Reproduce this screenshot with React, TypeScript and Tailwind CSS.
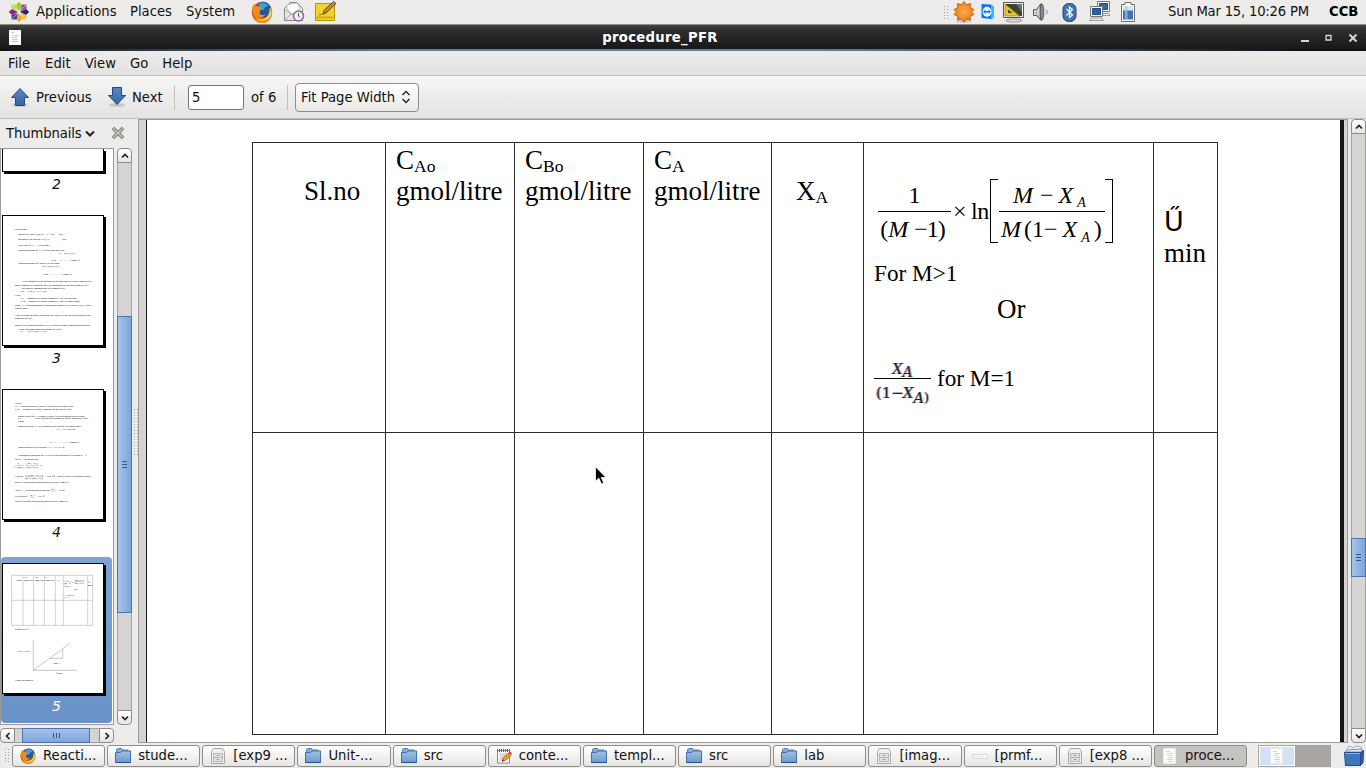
import React from "react";

type MiniLine = [number, number, number, string];

const page3: MiniLine[] = [
  [45, 60, 38, "Calculations:"],
  [54, 75, 110, "Molarity of NaOH (say) M = v1 × m1"],
  [177, 75, 12, "GMS"],
  [54, 90, 102, "Volume of the reactor VR (V1) ="],
  [186, 90, 12, "litre"],
  [54, 108, 94, "Flow rate of EA = v (vol/time)"],
  [54, 123, 140, "Concentration of EA in the feed mixture"],
  [177, 132, 48, "CA=(M×v)/(V)"],
  [153, 153, 86, "CAo = ------------- gmol/lit"],
  [54, 162, 124, "Concentration of NaOH in the feed"],
  [126, 171, 52, "CB=(M×v)/(V)"],
  [129, 195, 86, "CBo = ------------- gmol/lit"],
  [63, 216, 212, "As the conductivity of solution is variable only of NaOH conductivity"],
  [45, 228, 222, "meter reading at the outlet may be correlated to concentration at 30°C"],
  [63, 237, 132, "To express composition by conductivity"],
  [63, 246, 77, "Ca = CAo [1-XA/1-XB]"],
  [45, 258, 16, "Where"],
  [63, 267, 166, "CT = conductivity meter reading at T of the reaction"],
  [63, 276, 176, "CTo = conductivity meter reading at 30°C of feed stream"],
  [45, 289, 228, "Ohm - C is corresponding to measured conductivity ratio (C)/(C), using"],
  [45, 297, 39, "equation above"],
  [45, 318, 228, "Find the slope of meter calibrated for NaOH in the reactor solution at any"],
  [45, 327, 52, "temperature at 30°C"],
  [45, 348, 226, "Obtain the Concentration of CH3C using the data from equation below"],
  [54, 360, 132, "Final solution concentration at 30°C"],
  [63, 367, 76, "CA = C(B+C)/(B+C+0)"],
];

const page4: MiniLine[] = [
  [45, 162, 18, "Where"],
  [45, 171, 175, "XA = Concentration of NaOH in the mixture at steady state"],
  [45, 180, 171, "CAo = Conductivity meter reading for mixture at 30°C"],
  [54, 201, 200, "Obtain value of CA through (NaOH) in the equation rate is equal"],
  [54, 207, 10, "CT"],
  [105, 207, 160, "gives final mixture from the initial reading at 30°C"],
  [54, 216, 18, "graph"],
  [54, 231, 188, "Obtain value of CA by formula in the rate of the steady state"],
  [171, 240, 55, "CA=CT-CAo*CBo"],
  [147, 279, 90, "XA  ---------------- gmol/lit"],
  [54, 294, 138, "Conversion of ethyl acetate: XA=1-CA/CAo"],
  [54, 318, 205, "Performance equation for PFR with rate equation of first order n = k"],
  [45, 330, 70, "for M=1 can be derived"],
  [50, 343, 8, "1"],
  [45, 353, 28, "CAo(M-1)"],
  [78, 343, 36, "[ M - XA ]"],
  [78, 353, 36, "[M(1-XA)]"],
  [117, 347, 9, "=kt"],
  [45, 381, 24, "Plotting"],
  [75, 377, 54, "1     [ M - XA ]"],
  [75, 386, 54, "(M-1) [M(1-XA)]"],
  [141, 381, 24, "vs  Ű"],
  [171, 381, 102, "yields a straight line passing through"],
  [45, 399, 162, "origin if the assumed rate equation is correct. Slope is k"],
  [45, 423, 105, "For M=1, the performance equation"],
  [153, 420, 14, "XA"],
  [170, 423, 24, "= kCAot"],
  [45, 441, 37, "In this plot of"],
  [90, 438, 14, "XA"],
  [114, 441, 20, "vs  Ű"],
  [45, 456, 158, "yields a straight line passing through origin. Slope is k"],
];

const page5: MiniLine[] = [
  [48, 93, 17, "Sl.no"],
  [72, 84, 9, "CAo"],
  [72, 93, 27, "gmol/litre"],
  [105, 84, 9, "CBo"],
  [105, 93, 27, "gmol/litre"],
  [136, 84, 7, "CA"],
  [136, 93, 27, "gmol/litre"],
  [171, 93, 9, "XA"],
  [198, 93, 5, "1"],
  [192, 102, 20, "(M -1)"],
  [213, 98, 9, "×ln"],
  [224, 93, 27, "[M-XA]"],
  [224, 102, 27, "M(1-XA)"],
  [192, 111, 21, "For M>1"],
  [222, 120, 9, "Or"],
  [193, 137, 34, "XA for M=1"],
  [193, 144, 14, "(1-XA)"],
  [264, 100, 6, "Ű"],
  [264, 108, 13, "min"],
  [45, 240, 42, "Graph for M ≠1"],
  [51, 307, 37, "1/(M-1)×ln"],
  [159, 342, 21, "Slope=k"],
  [168, 372, 18, "Ű  min"],
  [45, 393, 62, "From the graph k ="],
];

function Page({ lines, top, children }: { lines: MiniLine[]; top: number; children?: React.ReactNode }) {
  return (
    <div className="h-[131px] w-[102px] shrink-0 border border-black bg-white shadow-[2px_2px_0_0_#000]">
      <svg width="100" height="129" viewBox={`9 ${top} 300 387`} className="block">
        {children}
        {lines.map(([x, y, w, t], i) => (
          <text key={i} x={x} y={y} textLength={w} lengthAdjust="spacingAndGlyphs" fontSize="7.8" fill="#000" fontFamily="Liberation Serif, serif">
            {t}
          </text>
        ))}
      </svg>
    </div>
  );
}

function Firefox({ s }: { s: number }) {
  return (
    <svg width={s} height={s} viewBox="0 0 20 20" className="shrink-0">
      <circle cx="10" cy="10" r="9.3" fill="#e2611a" />
      <circle cx="11" cy="8" r="7.3" fill="#1d5a9e" />
      <path d="M7 2.5c3-1.500 7-1 9 2l-3 1-2 3-4-1z" fill="#3fa0d6" />
      <path d="M.8 10C.5 6 1.500 4 3 2.500l1 2.200C6 4 7.500 5 8 6l2 .7c0 1.200-1.500 1.300-2 2.300.300 1 .2 1.600-.5 2.200 1.200 2 3.800 2 5.500.8-1 3.500-6 4-8 1.500C7 17 13 18 16.500 13.500c1-2 1.100-5 .5-7.500 2 2 2.500 5 2 7.500A9.300 9.300 0 0 1 .8 10z" fill="#f08c1c" />
      <path d="M17 6c2 3 2 7-.5 9.500-3 3-8 3.500-11.500.5 4 1.500 9 .5 11-4 .8-2 1.200-4 1-6z" fill="#ffd04a" />
      <path d="M1 8c.3 4 2 7 5 9-3-1-5.200-4-5.200-7z" fill="#c5301a" />
    </svg>
  );
}

function Folder() {
  return (
    <svg width="18" height="18" viewBox="0 0 18 18" className="shrink-0">
      <defs>
        <linearGradient id="folderFill" x1="0" y1="0" x2="0" y2="1">
          <stop offset="0" stopColor="#a3c0e2" />
          <stop offset="1" stopColor="#6b9bd0" />
        </linearGradient>
      </defs>
      <path d="M2.500 6V2.500l1-1h4l1 1.500h5.500V6z" fill="#88abd4" stroke="#5680b5" />
      <path d="M1.500 5.500h5l1.500-1.500h8.500v11.500h-15z" fill="url(#folderFill)" stroke="#3f6fae" />
      <path d="M1.500 15.500h15" stroke="#24508d" />
    </svg>
  );
}

function Cabinet() {
  return (
    <svg width="18" height="18" viewBox="0 0 18 18" className="shrink-0">
      <path d="M4.500 1.500h9l2 3v12h-13v-12z" fill="#f0f0ef" stroke="#a7a7a5" />
      <path d="M4.500 6.500h9v4h-9zM4.500 10.500h9v4h-9z" fill="#e2e2e1" stroke="#b5b5b3" />
      <path d="M7.500 8.500h3M7.500 12.500h3" stroke="#a0a09e" />
    </svg>
  );
}

function Doc() {
  return (
    <svg width="14" height="18" viewBox="0 0 14 18" className="shrink-0">
      <path d="M.5 1.500h12v15H.5z" fill="#fbfbfb" stroke="#e9e9e7" />
      <path d="M3 4.500h4M4 6.500h6M4 8.500h5M5 10.500h5M4 12.500h6M5 14.500h5" stroke="#d6d6d6" />
    </svg>
  );
}

function Notepad() {
  return (
    <svg width="18" height="18" viewBox="0 0 18 18" className="shrink-0">
      <path d="M2.500 3.500h12v12.500h-12z" fill="#fafafa" stroke="#888" />
      <path d="M2 3.500h13" stroke="#666" strokeWidth="3" strokeDasharray="1 1" />
      <path d="M4.500 7h8M4.500 9h8M4.500 11h6M4.500 13h4" stroke="#bbb" />
      <path d="m7.500 14 .5-3 5.500-5 2.500 2.500-5.500 5z" fill="#f79a1c" stroke="#b8560a" strokeWidth=".8" />
      <path d="m13.500 5.500 1.500-1 2 2-1 1.500z" fill="#e23b2d" />
      <path d="m7 14.500.5-2 1.400 1.400z" fill="#222" />
    </svg>
  );
}

const tasks: [string, string, boolean?][] = [
  ["fox", "Reacti..."],
  ["folder", "stude..."],
  ["cab", "[exp9 ..."],
  ["folder", "Unit-..."],
  ["folder", "src"],
  ["note", "conte..."],
  ["folder", "templ..."],
  ["folder", "src"],
  ["folder", "lab"],
  ["cab", "[imag..."],
  ["bar", "[prmf..."],
  ["cab", "[exp8 ..."],
  ["doc", "proce...", true],
];

function TaskIcon({ kind }: { kind: string }) {
  if (kind === "fox") return <Firefox s={16} />;
  if (kind === "folder") return <Folder />;
  if (kind === "cab") return <Cabinet />;
  if (kind === "note") return <Notepad />;
  if (kind === "doc") return <Doc />;
  return (
    <svg width="18" height="18" viewBox="0 0 18 18" className="shrink-0">
      <path d="M1.500 7.500h15v4h-15z" fill="#f7f7f7" stroke="#dadad8" />
      <path d="M3 9.500h1M6 9.500h1M9 9.500h1" stroke="#d4d4d4" />
    </svg>
  );
}

function Arrow({ down }: { down?: boolean }) {
  return (
    <svg width="20" height="22" viewBox="0 0 20 22" className="shrink-0">
      <defs>
        <linearGradient id="arrowFill" x1="0" y1="0" x2="0" y2="1">
          <stop offset="0" stopColor="#5a88c4" />
          <stop offset="1" stopColor="#3465a4" />
        </linearGradient>
      </defs>
      <ellipse cx="10" cy="19" rx="8" ry="2" fill="#000" opacity=".14" />
      {down ? (
        <path d="M5.500 1.500h9v8h4L10 18.500 1.500 9.500h4z" fill="url(#arrowFill)" stroke="#204a87" />
      ) : (
        <path d="M5.500 19.500h9v-8h4L10 2.500 1.500 11.500h4z" fill="url(#arrowFill)" stroke="#204a87" />
      )}
    </svg>
  );
}

function Chevron({ dir }: { dir: "up" | "down" | "left" | "right" }) {
  const d = { up: "M2 6.500 5 3.500l3 3", down: "M2 3.500l3 3 3-3", left: "M6.500 2l-3 3 3 3", right: "M3.500 2l3 3-3 3" }[dir];
  return (
    <svg width="10" height="10" viewBox="0 0 10 10">
      <path d={d} fill="none" stroke="#222" strokeWidth="1.700" />
    </svg>
  );
}

const stepper = "flex shrink-0 items-center justify-center border border-[#8c8c89] bg-gradient-to-b from-white to-[#e6e5e3]";

function Dots({ className }: { className: string }) {
  return <div className={`shrink-0 bg-[linear-gradient(90deg,#edeceb_2px,transparent_2px),linear-gradient(#edeceb_2px,#a3a29f_2px)] bg-[size:3px_3px] ${className}`} />;
}

function Sub({ children }: { children: React.ReactNode }) {
  return <span className="relative top-[3px] text-[17.5px]">{children}</span>;
}

const cellBase = "border-[#2c2c2c] border-r";

function PanelIcons() {
  return (
    <div className="flex h-6">
      <Dots className="mt-[4px] mr-[5px] h-[17px] w-[6px]" />
      <svg width="22" height="24" viewBox="0 0 22 24">
        <defs>
          <radialGradient id="sunFill">
            <stop offset="0" stopColor="#fbab55" />
            <stop offset="1" stopColor="#f07d12" />
          </radialGradient>
        </defs>
        <ellipse cx="11" cy="21" rx="8" ry="1.800" fill="#000" opacity=".15" />
        <path d="m11 1.500 2.500 3.200 4-1.200-.4 4.100L21 9.500 18.500 12l2.500 2.500-3.900 1.500.4 4-4-.9L11 22.200l-2.500-3.100-4 .9.400-4L1 14.500 3.500 12 1 9.500l3.900-1.900-.4-4.100 4 1.200z" fill="url(#sunFill)" stroke="#c8650c" />
      </svg>
      <svg width="14" height="24" viewBox="0 0 14 24" className="ml-[6px]">
        <path d="m.5 4 9.500.5V19L.5 18z" fill="#087bf2" />
        <path d="m10 4.500 3 1.500v12l-3 1.500z" fill="#39b9ff" />
        <ellipse cx="6" cy="11.800" rx="4.400" ry="5" fill="#fff" />
        <path d="m2 11.800 2.500-2.300v1.500h3V9.500l2.500 2.300-2.500 2.300v-1.500h-3v1.500z" fill="#087bf2" />
      </svg>
      <svg width="24" height="24" viewBox="0 0 24 24" className="ml-[7px]">
        <ellipse cx="12" cy="20.500" rx="8" ry="1.600" fill="#ddd" stroke="#888" strokeWidth=".8" />
        <path d="M1.500 2.500h20v15h-20z" fill="#f4f4f2" stroke="#555753" />
        <path d="M3 4h17v12H3z" fill="#3c3f3c" />
        <path d="M14 4h6v8z" fill="#6c6f6c" />
        <path d="M3 4v12h14.500z" fill="#e8c716" stroke="#9a8205" strokeWidth=".7" />
        <path d="M6 9.500v3.500h4.500z" fill="#3c3f3c" />
      </svg>
      <svg width="18" height="24" viewBox="0 0 18 24" className="ml-[6px]">
        <path d="M1.500 9.500h3l4.500-6v17l-4.500-5h-3z" fill="#b5b7b3" stroke="#555753" />
        <path d="M3 10v5M6 9v6" stroke="#eee" />
        <ellipse cx="10" cy="12" rx="1.800" ry="8" fill="#888a85" stroke="#444" strokeWidth=".7" />
        <path d="M14 9.500c1.500 1.500 1.500 3.500 0 5" fill="none" stroke="#6e94c8" />
      </svg>
      <svg width="16" height="24" viewBox="0 0 16 24" className="ml-[12px]">
        <rect x="1" y="3.500" width="13" height="18" rx="5.500" fill="#4372ac" stroke="#234a80" />
        <path d="m4.500 9 6 6-3 2.500V7l3 2.500-6 6" fill="none" stroke="#fff" strokeWidth="1.200" />
      </svg>
      <svg width="24" height="24" viewBox="0 0 24 24" className="ml-[10px]">
        <path d="M9.500 1.500h12v10h-12z" fill="#f3f3f1" stroke="#777975" />
        <path d="M11.500 3.500h8v6h-8z" fill="#3468a8" stroke="#204a87" />
        <path d="M12 15.500h10l-1-2h-8z" fill="#eee" stroke="#888" strokeWidth=".8" />
        <path d="M2.500 6.500h12v10h-12z" fill="#f3f3f1" stroke="#777975" />
        <path d="M4.500 8.500h8v6h-8z" fill="#2d61a2" stroke="#204a87" />
        <path d="M1.500 20.500h14l-2-2.500h-10z" fill="#eee" stroke="#888" strokeWidth=".8" />
      </svg>
      <svg width="16" height="24" viewBox="0 0 16 24" className="ml-[8px] mr-px">
        <path d="M1.500 4.500h3.500v-2h6v2h3.500v17h-13z" fill="#fafafa" stroke="#6f716d" />
        <path d="M3 6h10v6H3z" fill="#dce5ee" />
        <path d="M3 10.500h10v9H3z" fill="#3d73b4" />
        <path d="M5 6h2.500v13.500H5z" fill="#a9c2e2" opacity=".7" />
      </svg>
    </div>
  );
}

export default function App() {
  return (
    <div className="relative flex h-[768px] w-[1366px] flex-col overflow-hidden bg-[#edeceb] text-[13.2px] leading-none whitespace-nowrap text-[#111] [font-family:'DejaVu_Sans',sans-serif]">
      {/* desktop panel */}
      <header className="flex h-[24px] shrink-0 items-center bg-[#edeceb]">
        <svg width="22" height="22" viewBox="0 0 22 22" className="ml-[8px] shrink-0">
          <path d="M11 .8 14 4l-3 6-3-6z" fill="#9ccd2a" />
          <path d="M21.200 11 18 14l-6-3 6-3z" fill="#262577" />
          <path d="M11 21.200 8 18l3-6 3 6z" fill="#efa724" />
          <path d="M.8 11 4 8l6 3-6 3z" fill="#932279" />
          <path d="M3.500 3.500H8l2.500 6.500-6.500-2.500h-.5z" fill="#b6d95e" />
          <path d="M14 3.500h4.500V8L12 10.500z" fill="#a64592" />
          <path d="m12 12 6.500 2.500v4H14z" fill="#f2b64a" />
          <path d="m10 12-1.500 6.500h-5V14z" fill="#403f90" />
          <path d="M4 4l14 14M18 4 4 18" stroke="#fff" strokeWidth=".5" />
        </svg>
        <span className="ml-[6px] w-[94px]">Applications</span>
        <span className="w-[56px]">Places</span>
        <span className="w-[65px]">System</span>
        <Firefox s={22} />
        <svg width="22" height="24" viewBox="0 0 22 24" className="ml-[10px]">
          <path d="M1.500 8.500 7 2.500h7l5.500 6v12h-18z" fill="#e6e7e4" stroke="#888a85" />
          <path d="M4 9V5l10-2 2 3v5l-6 4z" fill="#fff" stroke="#bbb" strokeWidth=".8" />
          <path d="m2 20 7-7 4 3M2 9l7 6" fill="none" stroke="#aaa" />
          <circle cx="15.500" cy="16" r="5" fill="#f2eff5" stroke="#846a9b" strokeWidth="1.500" />
          <path d="M15.500 13v3l1.500 1.500" fill="none" stroke="#555" />
        </svg>
        <svg width="24" height="24" viewBox="0 0 24 24" className="ml-[9px]">
          <path d="M1.500 3.500h19v17h-19z" fill="#f5d327" stroke="#b9930a" />
          <path d="M2.500 17.500h17" stroke="#d2a912" strokeWidth="2" />
          <path d="m9 14 1-3.500L19.500 1.500 22 3.500 12 13z" fill="#c18b43" stroke="#4b3b23" strokeWidth=".9" />
          <path d="M5 14.500c2 1 3-1 5-.5" fill="none" stroke="#846b10" />
        </svg>
        <div className="ml-auto flex items-center">
          <PanelIcons />
          <span className="ml-[31px] w-[161px] tracking-[-0.21px]">Sun Mar 15, 10:26 PM</span>
          <span className="w-[37px] font-bold text-black">CCB</span>
        </div>
      </header>

      {/* window title */}
      <div className="flex h-[27px] shrink-0 items-center border-t border-[#8c8d89] bg-gradient-to-b from-[#454545] via-[#2d2d2d] via-20% to-[#161616] text-white">
        <div className="flex h-full w-full items-center border-b-2 border-[#314a6b] [border-image:linear-gradient(90deg,#111,#5d7fa9_30%,#5d7fa9_60%,#111_95%)_0_0_1_0]">
          <div className="ml-[8px] flex w-[58px]">
            <svg width="14" height="17" viewBox="0 0 14 17">
              <path d="M1 1h12v15H1z" fill="#fafafa" />
              <path d="M3 3.500h3M4 6.500h6M4 8.500h5M4 10.500h6M4 12.500h6" stroke="#cdcdcd" />
            </svg>
          </div>
          <span className="flex-1 pt-[2px] pr-[46px] text-center font-bold tracking-[0.3px]">procedure_PFR</span>
          <svg width="66" height="24" viewBox="0 0 66 24" className="shrink-0">
            <path d="M1 15h8v2H1z" fill="#d5d5d3" />
            <path d="M26 10.500h5v4.500h-5z" fill="none" stroke="#d5d5d3" strokeWidth="1.300" />
            <path d="m49.500 9.500 7 7M56.500 9.500l-7 7" stroke="#d5d5d3" strokeWidth="2" />
          </svg>
        </div>
      </div>

      {/* menu */}
      <nav className="flex h-[25px] shrink-0 items-center gap-[14px] border-b border-[#bfbebc] bg-gradient-to-b from-[#edeceb] to-[#e3e2e0] pt-[2px] pl-[8px]">
        <span className="mr-px">File</span>
        <span>Edit</span>
        <span>View</span>
        <span>Go</span>
        <span>Help</span>
      </nav>

      {/* toolbar */}
      <div className="flex h-[43px] shrink-0 items-center border-b border-[#bfbebc] bg-gradient-to-b from-[#f6f6f5] to-[#e4e3e1]">
        <div className="ml-[10px] flex w-[97px] items-center">
          <Arrow />
          <span className="ml-[6px] pt-[2px]">Previous</span>
        </div>
        <div className="flex w-[67px] items-center">
          <Arrow down />
          <span className="ml-[5px] pt-[2px]">Next</span>
        </div>
        <div className="h-[25px] w-px bg-[#c2c1be]" />
        <div className="ml-[13px] flex h-[25px] w-[56px] items-center rounded-[3px] border border-[#73736f] bg-white pt-px pl-[3px]">5</div>
        <span className="ml-[7px] w-[36px] pt-[2px]">of 6</span>
        <div className="h-[25px] w-px bg-[#c2c1be]" />
        <div className="ml-[7px] flex h-[29px] w-[124px] items-center rounded-[4px] border border-[#8c8c89] bg-gradient-to-b from-white to-[#e9e8e6] pl-[5px]">
          <span className="w-[98px] pt-[2px]">Fit Page Width</span>
          <svg width="14" height="16" viewBox="0 0 14 16">
            <path d="M3.500 6 7 2.500 10.500 6M3.500 10 7 13.500l3.500-3.500" fill="none" stroke="#222" strokeWidth="1.300" />
          </svg>
        </div>
      </div>

      {/* body */}
      <main className="flex h-[624px] shrink-0">
        <aside className="flex w-[132px] shrink-0 flex-col">
          <div className="flex h-[29px] shrink-0 items-center pl-[6px]">
            <span className="tracking-[-0.1px]">Thumbnails</span>
            <svg width="12" height="12" viewBox="0 0 12 12" className="ml-[2px]">
              <path d="m2 3.500 4 4 4-4" fill="none" stroke="#222" strokeWidth="2" />
            </svg>
            <svg width="14" height="14" viewBox="0 0 14 14" className="mb-px ml-[15px]">
              <path d="m2 2 10 10M12 2 2 12" stroke="#777a75" strokeWidth="3.600" />
              <path d="m2.500 2.500 9 9M11.500 2.500l-9 9" stroke="#c5c7c2" strokeWidth="1.500" />
            </svg>
          </div>
          <div className="flex h-[577px] shrink-0">
            <div className="flex w-[114px] shrink-0 flex-col overflow-hidden border border-[#9c9b98] bg-white pl-px text-[14px] italic">
              <div className="h-[23px] w-[102px] shrink-0 border border-t-0 border-black bg-white shadow-[2px_2px_0_0_#000]" />
              <span className="flex h-[24px] w-[109px] shrink-0 items-center justify-center">2</span>
              <div className="h-[19px] shrink-0" />
              <Page lines={page3} top={18} />
              <span className="flex h-[24px] w-[109px] shrink-0 items-center justify-center">3</span>
              <div className="h-[19px] shrink-0" />
              <Page lines={page4} top={120}>
                <path d="M45 346h28M78 346h36M75 380h54M153 423h14M90 441h14" stroke="#999" strokeWidth="1.500" />
              </Page>
              <span className="flex h-[24px] w-[109px] shrink-0 items-center justify-center">4</span>
              <div className="mt-[13px] -ml-px flex h-[166px] w-[111px] shrink-0 flex-col rounded-[4px] bg-gradient-to-b from-[#7fa3d6] to-[#6a92c8] pt-[6px] pl-px text-white">
                <Page lines={page5} top={42}>
                  <path d="M35 76h243v150H35zM35 151h243M69 76v150M101 76v150M133 76v150M166 76v150M190 76v150M263 76v150" fill="none" stroke="#bbb" strokeWidth="2" />
                  <path d="M100 271v90h131M100 361l110-81M148 325h40v-28M193 95h18M224 95h27" fill="none" stroke="#aaa" strokeWidth="2" />
                </Page>
                <span className="flex h-[24px] w-[109px] shrink-0 items-center justify-center">5</span>
              </div>
            </div>
            <div className="ml-[3px] flex w-[15px] shrink-0 flex-col">
              <div className={`${stepper} h-[15px] rounded-t-[4px]`}>
                <Chevron dir="up" />
              </div>
              <div className="h-[153px] border-x border-[#a5a4a1] bg-[#d5d4d2]" />
              <div className="flex h-[297px] flex-col items-center justify-center gap-[2px] border border-[#4d74ab] bg-gradient-to-r from-[#a6c3eb] to-[#7ea5d9]">
                <div className="h-px w-[5px] bg-[#33578c]" />
                <div className="h-px w-[5px] bg-[#33578c]" />
                <div className="h-px w-[5px] bg-[#33578c]" />
              </div>
              <div className="flex-1 border-x border-[#a5a4a1] bg-[#d5d4d2]" />
              <div className={`${stepper} h-[15px] rounded-b-[4px]`}>
                <Chevron dir="down" />
              </div>
            </div>
          </div>
          <div className="mt-[3px] flex h-[15px] w-[114px] shrink-0">
            <div className={`${stepper} w-[15px] rounded-l-[4px]`}>
              <Chevron dir="left" />
            </div>
            <div className="w-[7px] border-y border-[#a5a4a1] bg-[#d5d4d2]" />
            <div className="flex w-[68px] items-center justify-center gap-[2px] border border-[#4d74ab] bg-gradient-to-b from-[#a6c3eb] to-[#7ea5d9]">
              <div className="h-[5px] w-px bg-[#33578c]" />
              <div className="h-[5px] w-px bg-[#33578c]" />
              <div className="h-[5px] w-px bg-[#33578c]" />
            </div>
            <div className="flex-1 border-y border-[#a5a4a1] bg-[#d5d4d2]" />
            <div className={`${stepper} w-[15px] rounded-r-[4px]`}>
              <Chevron dir="right" />
            </div>
          </div>
        </aside>
        <Dots className="mt-[288px] h-[48px] w-[6px]" />

        {/* document */}
        <div className="flex w-[1210px] shrink-0 border border-[#9c9b98] bg-[#d5d4d2]">
          <div className="w-[7px] shrink-0" />
          <div className="w-[1198px] shrink-0 overflow-hidden border-r-4 border-l border-[#161616] bg-white pt-[22px] pl-[105px] text-black">
            <div className="grid h-[593px] w-[966px] grid-cols-[133px_129px_128.500px_128.500px_92px_290px_64px] grid-rows-[290px_302px] border-t border-l border-[#2c2c2c] text-[27px] leading-[31px] [font-family:'Liberation_Serif',serif]">
              <div className={`${cellBase} border-b pt-[33px] pl-[51px]`}>Sl.no</div>
              <div className={`${cellBase} border-b pt-[2px] pl-[10px]`}>
                <div className="h-[31px]">C<Sub>Ao</Sub></div>
                <div>gmol/litre</div>
              </div>
              <div className={`${cellBase} border-b pt-[2px] pl-[10px]`}>
                <div className="h-[31px]">C<Sub>Bo</Sub></div>
                <div>gmol/litre</div>
              </div>
              <div className={`${cellBase} border-b pt-[2px] pl-[10.500px]`}>
                <div className="h-[31px]">C<Sub>A</Sub></div>
                <div>gmol/litre</div>
              </div>
              <div className={`${cellBase} border-b pt-[33px] pl-[24px]`}>X<Sub>A</Sub></div>
              <div className={`${cellBase} border-b pt-[36px] pl-[10px]`}>
                {/* integrated rate expression */}
                <div className="flex h-[65px] pl-[4px] text-[24px] leading-[24px]">
                  <div className="flex w-[73px] flex-col items-center">
                    <div className="h-[32px] shrink-0 pt-[4px]">1</div>
                    <div className="h-px w-full shrink-0 bg-black" />
                    <div className="flex pt-[5px] pr-[3px]">
                      <span>(</span>
                      <i>M</i>
                      <span className="ml-[6px]">−</span>
                      <span className="-ml-px">1</span>
                      <span className="-ml-px">)</span>
                    </div>
                  </div>
                  <span className="mt-[20px] ml-[2px] w-[18px]">×</span>
                  <span className="mt-[20px] w-[19px] tracking-[-0.5px]">ln</span>
                  <div className="h-[64px] w-[8px] border-y border-l border-black" />
                  <div className="ml-px flex w-[106px] flex-col">
                    <div className="flex h-[32px] shrink-0 pt-[4px] pl-[14px]">
                      <i>M</i>
                      <span className="ml-[7px]">−</span>
                      <i className="ml-[5px]">X</i>
                      <i className="mt-[8px] ml-[4px] text-[14px]">A</i>
                    </div>
                    <div className="h-px w-full shrink-0 bg-black" />
                    <div className="flex pt-[5px] pl-[2px]">
                      <i>M</i>
                      <span className="ml-[3px]">(</span>
                      <span>1</span>
                      <span>−</span>
                      <i className="ml-[5px]">X</i>
                      <i className="mt-[9px] ml-[4px] text-[14px]">A</i>
                      <span className="ml-[4px]">)</span>
                    </div>
                  </div>
                  <div className="h-[64px] w-[8px] border-y border-r border-black" />
                </div>
                <div className="mt-[14px] h-[32px] text-[23.2px]">For M&gt;1</div>
                <div className="mt-[4px] h-[65px] pl-[123px]">Or</div>
                <div className="flex">
                  <div className="flex w-[57px] flex-col items-center text-[#2a1a40] italic [font-family:'DejaVu_Serif',serif] [text-shadow:-0.8px_0_#e0985acc,0.8px_0_#5bb4e8cc]">
                    <div className="flex h-[19px] shrink-0 text-[14.500px] leading-[20px]">
                      X<span className="relative top-[3px] text-[14px]">A</span>
                    </div>
                    <div className="h-px w-full shrink-0 bg-black" />
                    <div className="flex h-[22px] pt-[4px] text-[15px] leading-[20px]">
                      <span className="not-italic">(1</span>
                      <span className="not-italic">−</span>
                      <span className="-ml-px">X</span>
                      <span className="relative top-[5px] text-[14.500px]">A</span>
                      <span className="relative top-[5px] text-[13px] not-italic">)</span>
                    </div>
                  </div>
                  <span className="mt-[4px] ml-[6px] text-[23.2px]">for M=1</span>
                </div>
              </div>
              <div className={`${cellBase} border-b pt-[63px] pl-[10px]`}>
                <div className="h-[32px] [font-family:'DejaVu_Sans',sans-serif]">Ű</div>
                <div>min</div>
              </div>
              {[0, 1, 2, 3, 4, 5, 6].map((n) => (
                <div key={n} className={`${cellBase} border-b`} />
              ))}
            </div>
          </div>
        </div>
        <div className="ml-[3px] flex w-[15px] shrink-0 flex-col">
          <div className={`${stepper} h-[15px] rounded-t-[4px]`}>
            <Chevron dir="up" />
          </div>
          <div className="h-[404px] border-x border-[#a5a4a1] bg-[#d5d4d2]" />
          <div className="flex h-[39px] flex-col items-center justify-center gap-[2px] border border-[#4d74ab] bg-gradient-to-r from-[#a6c3eb] to-[#7ea5d9]">
            <div className="h-px w-[5px] bg-[#33578c]" />
            <div className="h-px w-[5px] bg-[#33578c]" />
            <div className="h-px w-[5px] bg-[#33578c]" />
          </div>
          <div className="flex-1 border-x border-[#a5a4a1] bg-[#d5d4d2]" />
          <div className={`${stepper} h-[15px] rounded-b-[4px]`}>
            <Chevron dir="down" />
          </div>
        </div>
      </main>

      {/* window list */}
      <footer className="flex h-[25px] shrink-0 pt-[2px]">
        <Dots className="mt-[2px] ml-[3px] h-[17px] w-[6px]" />
        <div className="ml-[3px] flex h-[22px] w-[1235px] gap-[2px]">
          {tasks.map(([kind, label, active], i) => (
            <div
              key={i}
              className={`flex min-w-0 flex-1 items-center rounded-[3px] border border-[#8c8c89] pl-[6px] ${active ? "bg-[#c5c3c0]" : "bg-gradient-to-b from-white to-[#e6e5e3]"}`}
            >
              <div className="flex w-[18px] shrink-0 justify-center">
                <TaskIcon kind={kind} />
              </div>
              <span className="ml-[6px]">{label}</span>
            </div>
          ))}
        </div>
        <div className="ml-[11px] flex h-[22px] w-[73px] border border-[#a8a5a2] bg-[#a8a5a2]">
          <div className="flex w-[36px] items-center justify-center border border-[#fff] bg-[#d0e1f8]">
            <Doc />
          </div>
        </div>
        <svg width="22" height="22" viewBox="0 0 22 22" className="ml-[12px] shrink-0">
          <path d="m3 6 3-5 4 2 4-2 4 1 2 6z" fill="#f5f7fa" stroke="#8393a8" strokeWidth=".8" />
          <path d="M4 5 18 4l2 3H2z" fill="#dfe8f3" stroke="#5a7fae" strokeWidth=".8" />
          <path d="M1.500 7.500h16v13h-15z" fill="#3e76bd" stroke="#204a87" />
          <path d="m17.500 7.500 3-2-.5 12-2.500 3z" fill="#2d5f9f" stroke="#204a87" />
          <path d="M2.500 8.500H17" stroke="#8db3e0" />
        </svg>
      </footer>

      <svg width="14" height="20" viewBox="0 0 14 20" className="absolute top-[466px] left-[594px]">
        <path d="M1.500.8v14.500l3.300-3.200 2.700 6 2.300-1-2.600-5.700h4.700z" fill="#000" stroke="#fff" strokeWidth=".8" />
      </svg>
    </div>
  );
}
